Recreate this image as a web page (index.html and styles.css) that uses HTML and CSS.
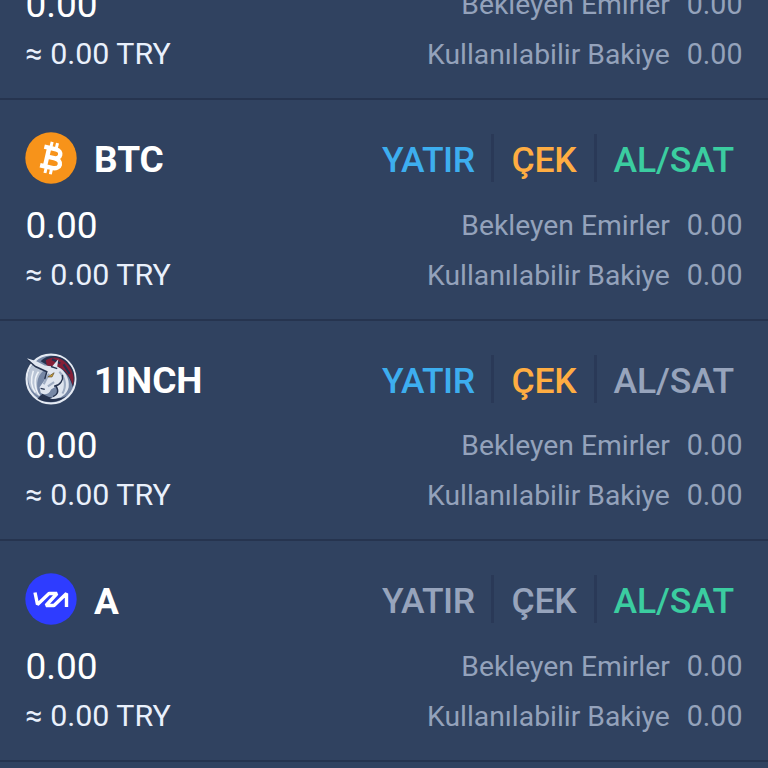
FILE: index.html
```
<!DOCTYPE html>
<html lang="tr">
<head>
<meta charset="utf-8">
<title>Cüzdan</title>
<link rel="stylesheet" href="styles.css">
</head>
<body>
<main class="wallet">
  <section class="asset">
    <div class="head"></div>
    <div class="line"><span class="amount">0.00</span><span class="label">Bekleyen Emirler</span><span class="value">0.00</span></div>
    <div class="line"><span class="fiat">≈ 0.00 TRY</span><span class="label">Kullanılabilir Bakiye</span><span class="value">0.00</span></div>
  </section>
  <section class="asset">
    <div class="head">
      <svg class="coin" viewBox="0 0 52 52"><circle cx="26" cy="26" r="25.7" fill="#f7931a"/><g transform="translate(26 26) rotate(13)" fill="none" stroke="#fff" stroke-width="4.400"><path d="M-9 -9.500H3C10 -9.500 10 -.5 3 -.5H-4M3 -.5C12.500 -.5 12.500 9.500 3 9.500H-9M-4 -9.500V9.500"/><path d="M-2.500 -16V-10M3 -16V-10M-2.500 10V16M3 10V16" stroke-width="3"/></g></svg>
      <h2 class="name">BTC</h2>
      <nav class="actions"><a class="deposit">YATIR</a><a class="withdraw">ÇEK</a><a class="trade">AL/SAT</a></nav>
    </div>
    <div class="line"><span class="amount">0.00</span><span class="label">Bekleyen Emirler</span><span class="value">0.00</span></div>
    <div class="line"><span class="fiat">≈ 0.00 TRY</span><span class="label">Kullanılabilir Bakiye</span><span class="value">0.00</span></div>
  </section>
  <section class="asset">
    <div class="head">
      <svg class="coin" viewBox="1 2 50 50">
        <circle cx="26" cy="27" r="23.500" fill="#7687a5" stroke="#e4eaf3" stroke-width="2"/>
        <path d="M4 25C4 17 8 12 13 13L22 17C13 22 11 30 14 43C7 39 4 32 4 25Z" fill="#b9c4d5"/>
        <path d="M9 19C6 28 7 35 11 40M14 20C9 27 10 36 15 43" stroke="#eef2f8" stroke-width="1.500" fill="none"/>
        <path d="M16 10C22 3 36 3 43 12C49 18 50 27 47 35C45 27 42 23 36 17L23 14Z" fill="#26334f"/>
        <path d="M21 9C29 4 36 7 41 12C47 18 49 26 47 33C44 23 39 17 31 15L22 14Z" fill="#851f37"/>
        <path d="M27 8L35 12M38 13L44 22" stroke="#243250" stroke-width="2"/>
        <path d="M13 46C22 51 34 50 41 43C34 47 24 46 18 41Z" fill="#26334f"/>
        <path d="M3 7L12 10L20 14L27 15L33 8L32 15C40 19 44 27 43 35C41 43 34 47 25 46C32 43 34 38 31 34L26 37C24 42 19 43 16 40L15 35L20 28L22 20L10 15Z" fill="#dfe5ef"/>
        <path d="M34 20C40 26 41 34 37 41M24 22L19 32M29 30L23 34" stroke="#9eacc2" stroke-width="2" fill="none"/>
        <path d="M4 9L11 15L22 20L20 27M16 36L20 37M29 34C35 33 38 28 37 23M31 34C34 39 32 42 28 44M26 15L32 17" stroke="#26334f" stroke-width="1.400" fill="none"/>
        <path d="M23 25L29 21L27 25Z" fill="#d8a62d" stroke="#6b5b3b" stroke-width=".8"/>
      </svg>
      <h2 class="name">1INCH</h2>
      <nav class="actions"><a class="deposit">YATIR</a><a class="withdraw">ÇEK</a><a class="trade disabled">AL/SAT</a></nav>
    </div>
    <div class="line"><span class="amount">0.00</span><span class="label">Bekleyen Emirler</span><span class="value">0.00</span></div>
    <div class="line"><span class="fiat">≈ 0.00 TRY</span><span class="label">Kullanılabilir Bakiye</span><span class="value">0.00</span></div>
  </section>
  <section class="asset">
    <div class="head">
      <svg class="coin" viewBox="0 0 52 52"><circle cx="26" cy="26" r="25.700" fill="#2e3cff"/><path d="M10 19.500L12.500 31.500L24 20.500H32L21 32.500H29L41.500 20.500V34" fill="none" stroke="#fff" stroke-width="3.400" stroke-linejoin="bevel"/></svg>
      <h2 class="name">A</h2>
      <nav class="actions"><a class="deposit disabled">YATIR</a><a class="withdraw disabled">ÇEK</a><a class="trade">AL/SAT</a></nav>
    </div>
    <div class="line"><span class="amount">0.00</span><span class="label">Bekleyen Emirler</span><span class="value">0.00</span></div>
    <div class="line"><span class="fiat">≈ 0.00 TRY</span><span class="label">Kullanılabilir Bakiye</span><span class="value">0.00</span></div>
  </section>
</main>
</body>
</html>
```
FILE: styles.css
```
* { box-sizing: border-box; }
body {
  margin: 0;
  height: 768px;
  overflow: hidden;
  background: #304260;
  color: #fff;
  font-family: Roboto, "Liberation Sans", sans-serif;
}
.wallet { margin-top: -121px; }
.asset {
  height: 220.8px;
  padding: 32px 25px 0;
  border-bottom: 2px solid #26344f;
}
.head {
  display: flex;
  align-items: center;
  height: 52px;
  margin-bottom: 15.8px;
}
.coin { width: 52px; height: 52px; flex: none; }
.name {
  margin: 5px 0 0 17px;
  font-size: 37px;
  font-weight: 700;
  line-height: 50px;
}
.actions {
  display: flex;
  margin: 0 -7px 0 auto;
  font-size: 35.5px;
  font-weight: 500;
}
.actions a { padding: 5px 17px 0 17px; line-height: 43px; }
.actions a + a { border-left: 3px solid #2a3957; }
.actions .trade { padding-right: 16px; letter-spacing: -0.1px; }
.deposit { color: #3daeef; letter-spacing: -0.5px; }
.withdraw { color: #ffad42; letter-spacing: -0.2px; }
.trade { color: #3bcda0; }
.actions .disabled { color: #97a4bc; }
.line {
  display: flex;
  height: 50px;
  line-height: 50px;
  font-size: 28.3px;
  white-space: nowrap;
}
.amount { margin-left: 0.5px; font-size: 37px; line-height: 52px; }
.fiat { margin-left: 0.5px; font-size: 30.4px; color: #e9f0fc; }
.label { margin-left: auto; color: #94a2bb; line-height: 51px; }
.value { margin-left: 17px; margin-right: 0.5px; font-size: 28.6px; color: #94a2bb; }
```
